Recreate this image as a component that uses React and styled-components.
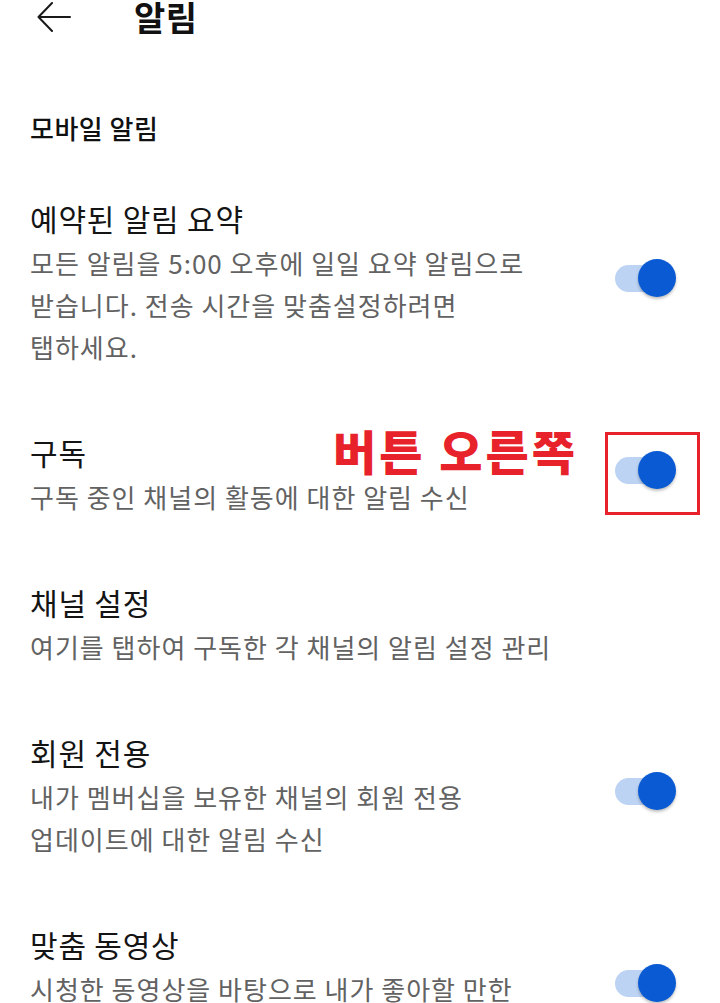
import React from 'react';
import styled, { createGlobalStyle } from 'styled-components';

const GlobalStyle = createGlobalStyle`
  html, body {
    margin: 0;
    padding: 0;
    background: #fff;
  }
  body {
    font-family: "Noto Sans CJK KR", "Noto Sans", sans-serif;
    color: #111;
    overflow: hidden;
  }
`;

const Page = styled.div`
  width: 720px;
  height: 1003px;
  overflow: hidden;
  background: #fff;
`;

const TopBar = styled.header`
  display: flex;
  align-items: center;
  height: 34px;
  padding-left: 37px;
  gap: 63px;
`;

const BackButton = styled.button`
  display: flex;
  align-items: center;
  padding: 0;
  border: none;
  background: none;
  cursor: pointer;
  svg {
    display: block;
  }
`;

const Title = styled.h1`
  margin: 0;
  font-size: 34px;
  line-height: 34px;
  font-weight: 700;
  letter-spacing: 0.5px;
  color: #111;
`;

const SectionLabel = styled.h2`
  margin: 77px 0 0;
  padding-left: 30px;
  font-size: 26px;
  line-height: 34px;
  font-weight: 500;
  letter-spacing: 0.5px;
  color: #111;
`;

const List = styled.div`
  display: flex;
  flex-direction: column;
  gap: 60px;
  margin-top: 49px;
  padding: 0 44px 0 30px;
`;

const Row = styled.div`
  position: relative;
  display: flex;
  align-items: center;
  justify-content: space-between;
  gap: 20px;
`;

const Texts = styled.div`
  display: flex;
  flex-direction: column;
  max-width: 560px;
`;

const RowTitle = styled.div`
  font-size: 30px;
  line-height: 48px;
  letter-spacing: 0.8px;
  color: #141414;
`;

const RowDesc = styled.div`
  font-size: 26px;
  line-height: 42px;
  letter-spacing: 1px;
  color: #626262;
  white-space: pre-line;
`;

const Switch = styled.div`
  position: relative;
  flex: none;
  width: 61px;
  height: 38px;
  margin-top: -6px;
  cursor: pointer;
`;

const Track = styled.span`
  position: absolute;
  left: 0;
  top: 6px;
  width: 50px;
  height: 27px;
  border-radius: 14px;
  background: ${({ on }) => (on ? '#bcd3f4' : '#d0d0d0')};
`;

const Thumb = styled.span`
  position: absolute;
  top: 0;
  left: ${({ on }) => (on ? '23px' : '0')};
  width: 38px;
  height: 38px;
  border-radius: 50%;
  background: ${({ on }) => (on ? '#0a5bd3' : '#f5f5f5')};
  box-shadow: 0 2px 3px rgba(0, 0, 0, 0.25);
`;

const Callout = styled.span`
  position: absolute;
  left: 303px;
  top: -8px;
  font-size: 47px;
  line-height: 60px;
  font-weight: 900;
  color: #e8222a;
  letter-spacing: 3px;
  white-space: nowrap;
`;

const Highlight = styled.span`
  position: absolute;
  left: 575px;
  top: 4px;
  width: 95px;
  height: 83px;
  box-sizing: border-box;
  border: 3px solid #e8222a;
  pointer-events: none;
`;

const settings = [
  {
    title: '예약된 알림 요약',
    desc: '모든 알림을 5:00 오후에 일일 요약 알림으로\n받습니다. 전송 시간을 맞춤설정하려면\n탭하세요.',
    toggle: true,
  },
  {
    title: '구독',
    desc: '구독 중인 채널의 활동에 대한 알림 수신',
    toggle: true,
    marked: true,
  },
  {
    title: '채널 설정',
    desc: '여기를 탭하여 구독한 각 채널의 알림 설정 관리',
  },
  {
    title: '회원 전용',
    desc: '내가 멤버십을 보유한 채널의 회원 전용\n업데이트에 대한 알림 수신',
    toggle: true,
  },
  {
    title: '맞춤 동영상',
    desc: '시청한 동영상을 바탕으로 내가 좋아할 만한\n동영상에 대한 알림 수신',
    toggle: true,
  },
];

const Toggle = ({ on }) => (
  <Switch role="switch" aria-checked={on}>
    <Track on={on} />
    <Thumb on={on} />
  </Switch>
);

const App = () => (
  <Page>
    <GlobalStyle />
    <TopBar>
      <BackButton aria-label="뒤로">
        <svg width="34" height="30" viewBox="0 0 34 30" fill="none" stroke="#1a1a1a" strokeWidth="2" strokeLinecap="round" strokeLinejoin="round">
          <path d="M33 15H2" />
          <path d="M15 1L1.5 15L15 29" />
        </svg>
      </BackButton>
      <Title>알림</Title>
    </TopBar>

    <SectionLabel>모바일 알림</SectionLabel>

    <List>
      {settings.map((item) => (
        <Row key={item.title}>
          <Texts>
            <RowTitle>{item.title}</RowTitle>
            <RowDesc>{item.desc}</RowDesc>
          </Texts>
          {item.toggle && <Toggle on />}
          {item.marked && (
            <>
              <Callout>버튼 오른쪽</Callout>
              <Highlight />
            </>
          )}
        </Row>
      ))}
    </List>
  </Page>
);

export default App;
